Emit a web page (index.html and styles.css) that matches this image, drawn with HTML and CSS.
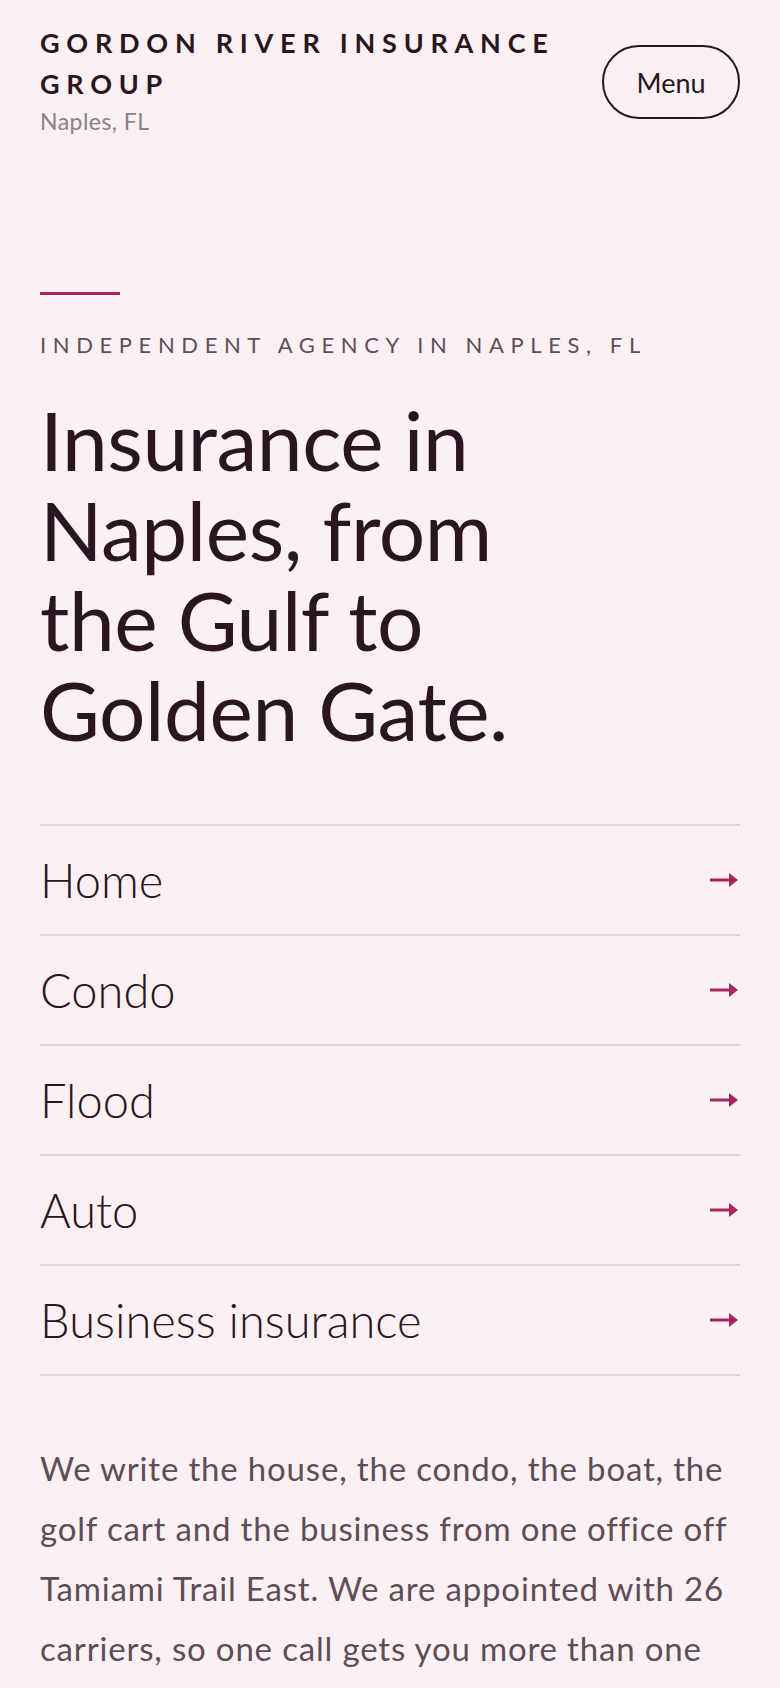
FILE: index.html
```html
<!DOCTYPE html>
<html lang="en">
<head>
<meta charset="utf-8">
<title>Gordon River Insurance Group</title>
<link rel="stylesheet" href="styles.css">
</head>
<body>
<header class="site-header">
  <div class="brand">
    <div class="brand-name">Gordon River Insurance Group</div>
    <div class="brand-loc">Naples, FL</div>
  </div>
  <button class="menu-btn" type="button">Menu</button>
</header>
<main class="hero">
  <span class="accent"></span>
  <p class="eyebrow">Independent agency in Naples, FL</p>
  <h1 class="title">Insurance in Naples, from the Gulf to Golden Gate.</h1>
  <ul class="services">
    <li><a href="#">Home<svg class="arrow" viewBox="0 0 28 14" aria-hidden="true"><rect x="0" y="5.5" width="21" height="3"/><path d="M19 0 L28 7 L19 14 Z"/></svg></a></li>
    <li><a href="#">Condo<svg class="arrow" viewBox="0 0 28 14" aria-hidden="true"><rect x="0" y="5.5" width="21" height="3"/><path d="M19 0 L28 7 L19 14 Z"/></svg></a></li>
    <li><a href="#">Flood<svg class="arrow" viewBox="0 0 28 14" aria-hidden="true"><rect x="0" y="5.5" width="21" height="3"/><path d="M19 0 L28 7 L19 14 Z"/></svg></a></li>
    <li><a href="#">Auto<svg class="arrow" viewBox="0 0 28 14" aria-hidden="true"><rect x="0" y="5.5" width="21" height="3"/><path d="M19 0 L28 7 L19 14 Z"/></svg></a></li>
    <li><a href="#">Business insurance<svg class="arrow" viewBox="0 0 28 14" aria-hidden="true"><rect x="0" y="5.5" width="21" height="3"/><path d="M19 0 L28 7 L19 14 Z"/></svg></a></li>
  </ul>
  <p class="intro">We write the house, the condo, the boat, the golf cart and the business from one office off Tamiami Trail East. We are appointed with 26 carriers, so one call gets you more than one quote.</p>
</main>
</body>
</html>
```

FILE: styles.css
```css
* { box-sizing: border-box; }
html, body { margin: 0; padding: 0; }
body {
  background: #fbf0f4;
  color: #2a1620;
  font-family: "Lato", "Liberation Sans", sans-serif;
}
.site-header {
  display: flex;
  align-items: flex-start;
  justify-content: space-between;
  gap: 24px;
  padding: 22px 40px 0;
}
.brand-name {
  font-size: 27px;
  font-weight: 700;
  letter-spacing: 0.25em;
  line-height: 41px;
  text-transform: uppercase;
  color: #2a1620;
}
.brand-loc {
  margin-top: 3px;
  font-size: 23px;
  letter-spacing: 0.02em;
  color: #8c7f86;
  line-height: 28px;
}
.menu-btn {
  flex: none;
  margin-top: 23px;
  width: 138px;
  height: 74px;
  border: 2px solid #2a1620;
  border-radius: 999px;
  background: transparent;
  font-family: inherit;
  font-size: 27px;
  color: #2a1620;
  padding: 0;
}
.hero {
  padding: 157px 40px 0;
}
.accent {
  display: block;
  width: 80px;
  height: 3px;
  background: #a8245a;
}
.eyebrow {
  margin: 36px 0 0;
  font-size: 22px;
  letter-spacing: 0.3em;
  text-transform: uppercase;
  color: #5f4e57;
  line-height: 28px;
}
.title {
  margin: 35px 0 0;
  max-width: 560px;
  font-size: 82px;
  font-weight: 400;
  line-height: 90px;
  letter-spacing: -0.005em;
  color: #2a1620;
}
.services {
  list-style: none;
  margin: 70px 0 0;
  padding: 0;
  border-top: 2px solid #e2d6dc;
}
.services li {
  border-bottom: 2px solid #e2d6dc;
}
.services a {
  display: flex;
  align-items: center;
  justify-content: space-between;
  height: 108px;
  font-size: 47px;
  font-weight: 300;
  color: #2a1620;
  text-decoration: none;
}
.arrow {
  width: 28px;
  height: 14px;
  fill: #a8245a;
  margin-right: 2px;
}
.intro {
  margin: 62px 0 0;
  font-size: 33px;
  line-height: 60px;
  letter-spacing: 0.025em;
  color: #5e4d56;
}
```
